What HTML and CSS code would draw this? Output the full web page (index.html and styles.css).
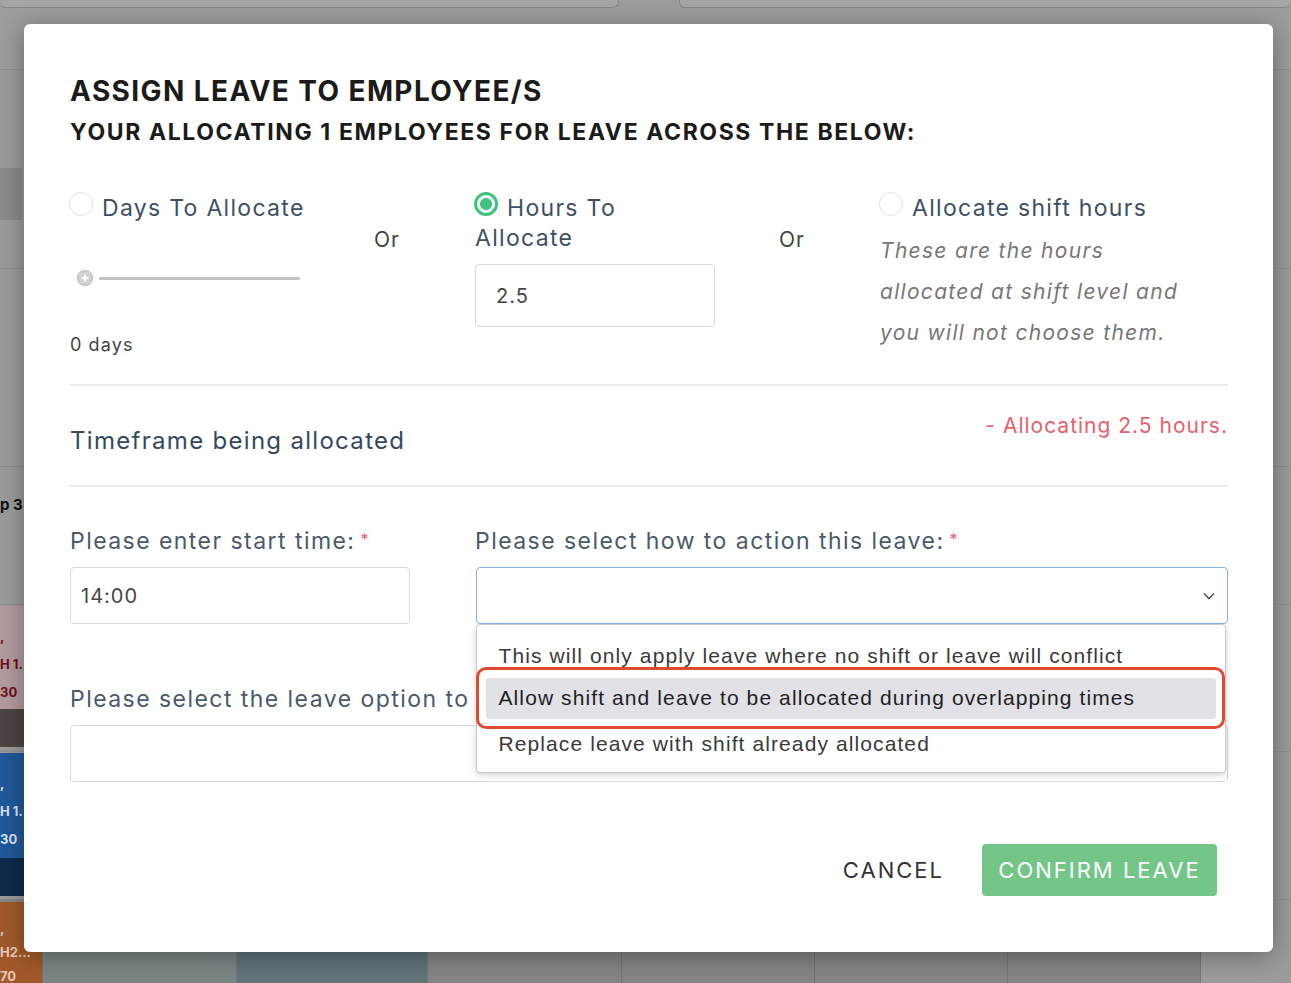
FILE: index.html
```html
<!DOCTYPE html>
<html lang="en">
<head>
<meta charset="utf-8">
<title>Assign leave</title>
<link rel="stylesheet" href="styles.css">
</head>
<body>
<div class="app">
  <div class="row r1">
    <div class="topcards"><div class="tcard tcard-a"></div><div class="tcard tcard-b"></div></div>
  </div>
  <div class="row r2"><div class="cell first"><div class="darkbox"></div></div></div>
  <div class="row r3"><div class="cell first"></div></div>
  <div class="row r4"><div class="cell first"><span class="grp">p 3</span></div></div>
  <div class="row r5"><div class="cell first">
    <div class="ev ev-pink"><span>,</span><span>H 1.</span><span>30</span></div>
    <div class="ev-foot foot-brown"></div>
  </div></div>
  <div class="row r6"><div class="cell first">
    <div class="ev ev-blue"><span>,</span><span>H 1.</span><span>30</span></div>
    <div class="ev-foot foot-navy"></div>
  </div></div>
  <div class="row r7">
    <div class="cell first"><div class="ev ev-orange"><span>,</span><span>H2...</span><span>70</span></div></div>
    <div class="cell col2"></div>
    <div class="cell col3"></div>
    <div class="cell col4"></div>
    <div class="cell col5"></div>
    <div class="cell col6"></div>
    <div class="cell col7"></div>
  </div>
</div>

<div class="modal">
  <h1 class="title">ASSIGN LEAVE TO EMPLOYEE/S</h1>
  <h2 class="subtitle">YOUR ALLOCATING 1 EMPLOYEES FOR LEAVE ACROSS THE BELOW:</h2>

  <div class="choices">
    <div class="choice">
      <div class="radio-label"><span class="radio"></span>Days To Allocate</div>
      <div class="slider">
        <svg class="knob" width="18" height="18" viewBox="0 0 18 18"><circle cx="9" cy="9" r="7.5" fill="#d3d3d3" stroke="#bdbdbd" stroke-width="1.2"/><path d="M9 4.2 L10.2 7.8 L13.8 9 L10.2 10.2 L9 13.8 L7.8 10.2 L4.2 9 L7.8 7.8Z" fill="#fff"/></svg>
        <span class="track"></span>
      </div>
      <div class="days">0 days</div>
    </div>
    <div class="or">Or</div>
    <div class="choice">
      <div class="radio-label"><span class="radio checked"></span>Hours To<br>Allocate</div>
      <div class="input input-hours">2.5</div>
    </div>
    <div class="or">Or</div>
    <div class="choice">
      <div class="radio-label"><span class="radio"></span>Allocate shift hours</div>
      <p class="note">These are the hours<br>allocated at shift level and<br>you will not choose them.</p>
    </div>
  </div>

  <div class="timeframe">
    <span class="tf-label">Timeframe being allocated</span>
    <span class="tf-info">- Allocating 2.5 hours.</span>
  </div>

  <div class="form">
    <div class="field">
      <div class="f-label">Please enter start time:<span class="req">*</span></div>
      <div class="input input-time">14:00</div>
    </div>
    <div class="field">
      <div class="f-label">Please select how to action this leave:<span class="req">*</span></div>
      <div class="select">
        <svg class="chev" width="14" height="10" viewBox="0 0 14 10"><path d="M2 2.5 L7 7.5 L12 2.5" fill="none" stroke="#555" stroke-width="1.6"/></svg>
        <div class="dropdown">
          <div class="opt">This will only apply leave where no shift or leave will conflict</div>
          <div class="opt opt-active">Allow shift and leave to be allocated during overlapping times</div>
          <div class="opt">Replace leave with shift already allocated</div>
        </div>
      </div>
    </div>
    <div class="field field-full">
      <div class="f-label">Please select the leave option to</div>
      <div class="input"></div>
    </div>
  </div>

  <div class="actions">
    <button class="btn-cancel">CANCEL</button>
    <button class="btn-confirm">CONFIRM LEAVE</button>
  </div>
</div>
</body>
</html>
```

FILE: styles.css
```css
* { box-sizing: border-box; }
html, body { margin: 0; padding: 0; }
body {
  width: 1291px;
  height: 983px;
  overflow: hidden;
  background: #9b9b9b;
  font-family: Inter, "DejaVu Sans", sans-serif;
  position: relative;
}

/* ---------- background app (dimmed) ---------- */
.app { display: flex; flex-direction: column; height: 983px; }
.row { display: flex; flex: none; border-bottom: 1px solid #8e8e8e; }
.r1 { height: 70px; background: #9d9d9d; }
.r2 { height: 199px; }
.r3 { height: 198px; }
.r4 { height: 138px; }
.r5 { height: 147px; }
.r6 { height: 148px; }
.r7 { flex: 1; border-bottom: none; }
.cell { flex: none; height: 100%; }
.first { width: 43px; display: flex; flex-direction: column; }
.topcards { display: flex; gap: 60px; width: 100%; height: 8px; align-items: flex-start; }
.tcard { height: 8px; background: #a5a5a5; border-bottom: 1.5px solid #858585; border-radius: 0 0 6px 6px; }
.tcard-a { width: 619px; border-right: 1.5px solid #858585; }
.tcard-b { flex: 1; border-left: 1.5px solid #858585; }
.darkbox { margin-top: 98px; width: 22px; height: 52px; background: #8b8b8b; }
.grp { margin-top: 28px; font-size: 15px; font-weight: 700; color: #111; white-space: nowrap; }
.ev { display: flex; flex-direction: column; margin-top: 1px; padding-top: 16px; font-size: 13px; font-weight: 700; line-height: 28px; white-space: nowrap; }
.ev-pink { height: 103px; background: #b39b9e; color: #6e0f1c; }
.foot-brown { height: 38px; background: #4d4443; }
.ev-blue { height: 105px; background: #20589a; color: #d9e4f2; }
.foot-navy { height: 38px; background: #0d2a4b; }
.ev-orange { height: 100%; margin-top: 2px; background: #a1592a; color: #e6c9b4; padding-top: 14px; line-height: 24px; }
.r7 .cell { border-right: 1px solid #757575; background: #858585; }
.col2 { width: 194px; background: #7b8686 !important; }
.col3 { width: 191px; background: #617479 !important; }
.col4 { width: 194px; }
.col5 { width: 193px; }
.col6 { width: 193px; }
.col7 { width: 193px; }

/* ---------- modal ---------- */
.modal {
  position: absolute;
  left: 24px;
  top: 24px;
  width: 1249px;
  height: 928px;
  background: #fff;
  border-radius: 6px;
  box-shadow: 0 4px 24px rgba(0, 0, 0, 0.35);
  padding: 50px 45px 0 46px;
}
.title {
  margin: 0;
  font-size: 28px;
  line-height: 34px;
  font-weight: 700;
  letter-spacing: 1.4px;
  color: #1b1b1b;
}
.subtitle {
  margin: 10px 0 0;
  font-size: 23px;
  line-height: 28px;
  font-weight: 700;
  letter-spacing: 1.6px;
  color: #1b1b1b;
}

.choices {
  display: grid;
  grid-template-columns: 304px 101px 304px 101px 1fr;
  margin-top: 46px;
  padding-bottom: 27px;
  border-bottom: 2px solid #ebebeb;
}
.radio-label { font-size: 23px; line-height: 30px; letter-spacing: 1.3px; color: #3d5066; }
.radio {
  display: inline-block;
  width: 24px;
  height: 24px;
  margin-right: 9px;
  margin-left: -1px;
  border-radius: 50%;
  border: 1.5px solid #dde2e8;
  background: #fff;
}
.radio.checked {
  border: 3px solid #3ec47c;
  background: radial-gradient(circle, #3ec47c 0 5.5px, #fff 6.5px);
}
.slider { display: flex; align-items: center; gap: 5px; margin-top: 46px; margin-left: 6px; height: 18px; }
.knob { flex: none; }
.track { display: block; width: 201px; height: 3px; border-radius: 2px; background: #c2c2c2; }
.days { margin-top: 46px; font-size: 18px; line-height: 24px; letter-spacing: 1.1px; color: #444; }
.or { padding-top: 33px; font-size: 21px; line-height: 30px; letter-spacing: 1px; color: #444; }
.input {
  height: 57px;
  border: 1.5px solid #d6dade;
  border-radius: 4px;
  padding-left: 10px;
  display: flex;
  align-items: center;
  font-size: 20px;
  letter-spacing: 1px;
  color: #454545;
}
.input-hours { width: 240px; height: 63px; margin-top: 11px; padding-left: 20px; }
.input-time { width: 340px; }
.note {
  margin: 7px 0 0;
  font-size: 21px;
  line-height: 41px;
  letter-spacing: 1.3px;
  font-style: italic;
  color: #777;
}

.timeframe {
  display: flex;
  justify-content: space-between;
  align-items: flex-start;
  height: 101px;
  border-bottom: 2px solid #ebebeb;
}
.tf-label { margin-top: 40px; font-size: 24px; line-height: 30px; letter-spacing: 1.3px; color: #34495e; }
.tf-info { margin-top: 27px; font-size: 21px; line-height: 26px; letter-spacing: 1px; color: #e8606a; }

.form {
  display: grid;
  grid-template-columns: 405px 1fr;
  row-gap: 60px;
  padding-top: 39px;
}
.field-full { grid-column: 1 / -1; }
.f-label { font-size: 23px; line-height: 30px; letter-spacing: 1.45px; color: #4a5a6b; margin-bottom: 11px; white-space: nowrap; }
.req { color: #e8606a; font-size: 16px; vertical-align: top; margin-left: 5px; position: relative; top: -2px; letter-spacing: 0; }
.select {
  position: relative;
  height: 57px;
  border: 1.5px solid #82b3ee;
  border-radius: 4px;
  margin-left: 1px;
  display: flex;
  align-items: center;
  justify-content: flex-end;
  padding-right: 11px;
}
.dropdown {
  position: absolute;
  left: -1.5px;
  top: 55.5px;
  width: 750px;
  height: 149px;
  background: #fff;
  border: 1.5px solid #c9c9c9;
  border-radius: 4px;
  box-shadow: 0 2px 6px rgba(0, 0, 0, 0.18);
  padding: 9px 9px 0;
  z-index: 2;
}
.opt {
  position: relative;
  height: 44px;
  padding-left: 13px;
  display: flex;
  align-items: center;
  font-family: "Liberation Sans", Arial, sans-serif;
  font-size: 21px;
  letter-spacing: 1.1px;
  color: #3a3a3a;
  border-radius: 3px;
}
.opt-active { background: #e1e1e7; color: #1f1f1f; height: 41px; margin-bottom: 3px; }
.opt-active::after {
  content: "";
  position: absolute;
  left: -10px;
  right: -9px;
  top: -11px;
  bottom: -10px;
  border: 3px solid #df4a33;
  border-radius: 10px;
}

.actions {
  display: flex;
  justify-content: flex-end;
  align-items: center;
  gap: 22px;
  margin-top: 62px;
  padding-right: 11px;
}
button { font-family: inherit; cursor: pointer; }
.btn-cancel {
  border: none;
  background: none;
  padding: 0 16px;
  font-size: 22px;
  letter-spacing: 2px;
  color: #333;
  height: 52px;
}
.btn-confirm {
  border: none;
  background: #73c688;
  color: #fff;
  border-radius: 4px;
  height: 52px;
  width: 235px;
  font-size: 22px;
  letter-spacing: 2px;
  padding: 0;
}
```
